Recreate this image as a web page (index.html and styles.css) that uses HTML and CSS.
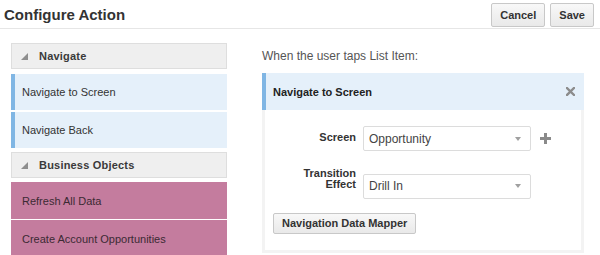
FILE: index.html
```html
<!DOCTYPE html>
<html>
<head>
  <title>Configure Action</title>
  <meta charset="utf-8">
  <link rel="stylesheet" href="styles.css">
</head>
<body>
  <div class="page">
    <!-- Title bar -->
    <div class="topbar">
      <div class="page-title">Configure Action</div>
      <div class="top-actions">
        <button class="btn">Cancel</button>
        <button class="btn">Save</button>
      </div>
    </div>

    <div class="content">
      <!-- Action palette -->
      <div class="palette">
        <div class="group-header"><span class="group-caret"></span>Navigate</div>
        <div class="action-item nav">Navigate to Screen</div>
        <div class="action-item nav">Navigate Back</div>
        <div class="group-header"><span class="group-caret"></span>Business Objects</div>
        <div class="action-item data">Refresh All Data</div>
        <div class="action-item data">Create Account Opportunities</div>
      </div>

      <!-- Action editor -->
      <div class="editor">
        <div class="editor-hint">When the user taps List Item:</div>
        <div class="action-card">
          <div class="card-header">
            <span>Navigate to Screen</span>
            <svg class="close-icon" width="9" height="9" viewBox="0 0 9 9">
              <path d="M1 1 L8 8 M8 1 L1 8" stroke="#8c8c8c" stroke-width="2.4" stroke-linecap="square"/>
            </svg>
          </div>
          <div class="card-body">
            <div class="form-grid">
              <label class="field-label">Screen</label>
              <div class="select">
                <span>Opportunity</span>
                <span class="select-arrow"></span>
              </div>
              <svg class="add-icon" width="11" height="11" viewBox="0 0 11 11">
                <rect x="0" y="4" width="11" height="3" fill="#8a8a8a"/>
                <rect x="4" y="0" width="3" height="11" fill="#8a8a8a"/>
              </svg>

              <label class="field-label">Transition<br>Effect</label>
              <div class="select">
                <span>Drill In</span>
                <span class="select-arrow"></span>
              </div>
              <span></span>
            </div>
            <button class="btn mapper-btn">Navigation Data Mapper</button>
          </div>
        </div>
      </div>
    </div>
  </div>
</body>
</html>
```

FILE: styles.css
```css
body {
  margin: 0;
  background: #fff;
  width: 600px;
  height: 255px;
  overflow: hidden;
  font-family: 'Liberation Sans', Arial, sans-serif;
  color: #333;
}

.topbar {
  display: flex;
  justify-content: space-between;
  align-items: center;
  height: 28px;
  padding: 0 6px 0 4px;
  border-bottom: 1px solid #e6e6e6;
}

.page-title {
  font-size: 15px;
  font-weight: bold;
  color: #333;
  padding-top: 1px;
}

.top-actions {
  display: flex;
  gap: 5px;
  padding-top: 2px;
}

.btn {
  height: 24px;
  padding: 0 8px;
  font-family: inherit;
  font-size: 11px;
  font-weight: bold;
  color: #333;
  background: linear-gradient(#f8f8f8, #e9e9e9);
  border: 1px solid #c8c8c8;
  border-radius: 2px;
}

.content {
  display: flex;
  gap: 35px;
  padding: 14px 0 0 11px;
}

/* palette */
.palette {
  width: 216px;
  display: flex;
  flex-direction: column;
}

.group-header {
  display: flex;
  align-items: center;
  height: 24px;
  padding-left: 9px;
  margin: 2px 0 4px;
  background: #efefef;
  border: 1px solid #dedede;
  font-size: 11px;
  font-weight: bold;
  color: #3a3a3a;
  letter-spacing: 0.2px;
}

.group-header:first-child {
  margin-top: 0;
  margin-bottom: 5px;
}

.group-caret {
  width: 0;
  height: 0;
  border-left: 7px solid transparent;
  border-bottom: 7px solid #8e8e8e;
  margin-right: 11px;
  margin-top: 1px;
}

.action-item {
  display: flex;
  align-items: center;
  font-size: 11px;
  color: #333;
}

.action-item.nav {
  height: 36px;
  margin-bottom: 2px;
  padding-left: 7px;
  background: #e5f0fa;
  border-left: 4px solid #80b6e4;
}

.action-item.data {
  height: 37px;
  margin-bottom: 1px;
  padding-left: 11px;
  background: #c47c9e;
  color: #3b2a33;
}

/* editor */
.editor {
  width: 322px;
}

.editor-hint {
  font-size: 12px;
  color: #555;
  line-height: 16px;
  margin: 5px 0 9px;
}

.card-header {
  display: flex;
  justify-content: space-between;
  align-items: center;
  height: 37px;
  padding: 0 9px 0 7px;
  background: #e5f0fa;
  border-left: 4px solid #80b6e4;
  font-size: 11px;
  font-weight: bold;
  color: #222;
}

.card-body {
  background: #fff;
  border: 3px solid #f3f3f3;
  border-top: none;
  padding: 16px 8px 16px;
}

.form-grid {
  display: grid;
  grid-template-columns: 83px 168px auto;
  column-gap: 7px;
  row-gap: 17px;
  align-items: last baseline;
  margin-bottom: 14px;
}

.field-label {
  text-align: right;
  font-size: 11px;
  font-weight: bold;
  line-height: 11px;
  color: #333;
}

.select {
  display: flex;
  justify-content: space-between;
  align-items: center;
  height: 23px;
  padding: 0 9px 0 5px;
  border: 1px solid #dcdcdc;
  border-radius: 2px;
  font-size: 12px;
  color: #444;
}

.select-arrow {
  width: 0;
  height: 0;
  border-left: 3px solid transparent;
  border-right: 3px solid transparent;
  border-top: 4px solid #a0a0a0;
}

.add-icon {
  align-self: center;
  margin-left: 2px;
}

.mapper-btn {
  height: 21px;
  display: block;
}
```
